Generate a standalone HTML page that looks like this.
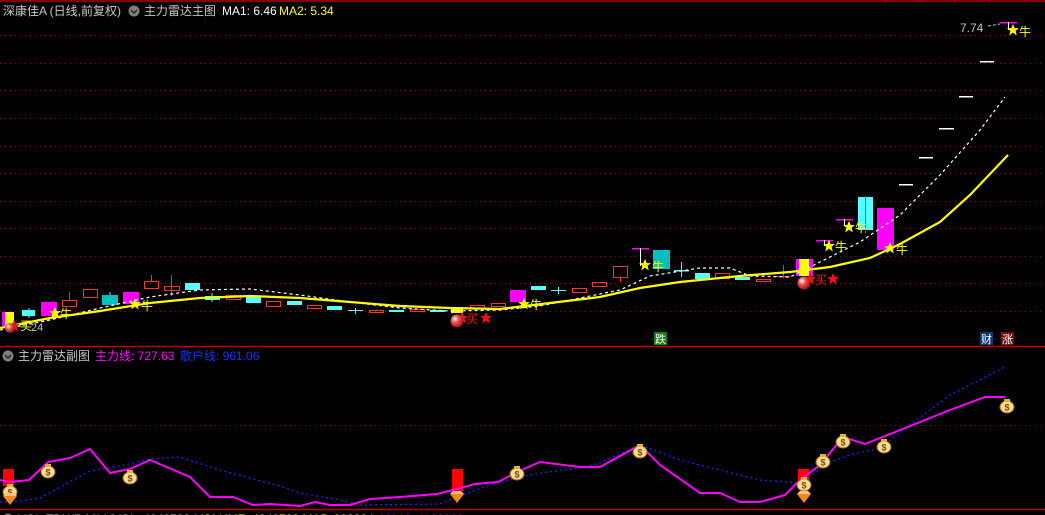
<!DOCTYPE html>
<html><head><meta charset="utf-8"><style>
html,body{margin:0;padding:0;background:#000;width:1045px;height:515px;overflow:hidden}
svg{display:block}
text{font-family:"Liberation Sans","Noto Sans CJK SC",sans-serif}
</style></head><body>
<svg width="1045" height="515" viewBox="0 0 1045 515" xmlns="http://www.w3.org/2000/svg">
<defs>
<g id="star"><polygon points="0,-6 1.8,-1.9 6,-1.9 2.6,0.8 3.8,5.5 0,2.6 -3.8,5.5 -2.6,0.8 -6,-1.9 -1.8,-1.9" /></g>
<g id="bag"><ellipse cx="0" cy="2" rx="7" ry="6" fill="#f4e08a" stroke="#9b6a10" stroke-width="1"/><rect x="-3" y="-6" width="6" height="3" fill="#e8b030"/><text x="0" y="5.5" font-size="9" font-weight="bold" fill="#8a3a2a" text-anchor="middle">$</text></g>
<g id="dia"><polygon points="-7,-3 7,-3 0,6" fill="#f08a20"/><polygon points="-7,-3 7,-3 4,-6 -4,-6" fill="#ffc080"/></g>
<radialGradient id="ball" cx="0.35" cy="0.35" r="0.7"><stop offset="0" stop-color="#fff"/><stop offset="0.4" stop-color="#f05050"/><stop offset="1" stop-color="#901010"/></radialGradient>
</defs>
<line x1="0" y1="1" x2="1045" y2="1" stroke="#b00000" stroke-width="1.5"/>
<g stroke="#b00000" stroke-width="1">
<line x1="35" y1="0" x2="35" y2="3"/><line x1="885" y1="0" x2="885" y2="3"/><line x1="920" y1="0" x2="920" y2="3"/><line x1="955" y1="0" x2="955" y2="3"/><line x1="990" y1="0" x2="990" y2="3"/><line x1="1025" y1="0" x2="1025" y2="3"/>
</g>
<g stroke="#900000" stroke-width="1" stroke-dasharray="1,4">
<line x1="0" y1="35.5" x2="1045" y2="35.5"/><line x1="0" y1="63.5" x2="1045" y2="63.5"/><line x1="0" y1="90.5" x2="1045" y2="90.5"/><line x1="0" y1="118.5" x2="1045" y2="118.5"/><line x1="0" y1="146.5" x2="1045" y2="146.5"/><line x1="0" y1="173.5" x2="1045" y2="173.5"/><line x1="0" y1="201.5" x2="1045" y2="201.5"/><line x1="0" y1="228.5" x2="1045" y2="228.5"/><line x1="0" y1="256.5" x2="1045" y2="256.5"/><line x1="0" y1="283.5" x2="1045" y2="283.5"/><line x1="0" y1="311.5" x2="1045" y2="311.5"/>
<line x1="0" y1="425.5" x2="1045" y2="425.5"/>
</g>
<line x1="0" y1="346.5" x2="1045" y2="346.5" stroke="#c00000" stroke-width="1.5"/>
<line x1="0" y1="509.5" x2="1045" y2="509.5" stroke="#c00000" stroke-width="1.5"/>

<text x="3" y="15" font-size="12" fill="#c8c8c8">深康佳A (日线,前复权)</text>
<circle cx="134" cy="11" r="5.5" fill="#808080"/><path d="M131,10 l3,3 l3,-3" stroke="#222" stroke-width="1.4" fill="none"/>
<text x="144" y="15" font-size="12" fill="#c8c8c8">主力雷达主图</text>
<text x="222" y="15" font-size="12" fill="#fff">MA1: 6.46</text>
<text x="279" y="15" font-size="12" fill="#ffff00">MA2: 5.34</text>

<g shape-rendering="crispEdges">
<rect x="2" y="312" width="5" height="14" fill="#ff00ff"/><rect x="5" y="312" width="9" height="13" fill="#ffff00"/>
<rect x="22" y="310" width="13" height="6" fill="#54ffff"/><line x1="29" y1="308" x2="29" y2="318" stroke="#54ffff"/>
<rect x="41" y="302" width="16" height="14" fill="#ff00ff"/>
<rect x="62.5" y="300.5" width="14" height="6" fill="none" stroke="#ff3232"/><line x1="69.5" y1="292" x2="69.5" y2="300" stroke="#ff3232"/>
<rect x="83.5" y="289.5" width="14" height="8" fill="none" stroke="#ff3232"/>
<rect x="102" y="295" width="16" height="10" fill="#00c0c0"/><line x1="110" y1="292" x2="110" y2="295" stroke="#54ffff"/>
<rect x="123" y="292" width="16" height="12" fill="#ff00ff"/>
<rect x="144.5" y="281.5" width="14" height="7" fill="none" stroke="#ff3232"/><line x1="151.5" y1="275" x2="151.5" y2="281" stroke="#ff3232"/>
<rect x="164.5" y="286.5" width="15" height="4" fill="none" stroke="#ff3232"/><line x1="171.5" y1="275" x2="171.5" y2="296" stroke="#ff3232"/>
<rect x="185" y="283" width="15" height="7" fill="#54ffff"/>
<rect x="205" y="296" width="15" height="4" fill="#54ffff"/><line x1="212" y1="293" x2="212" y2="302" stroke="#54ffff"/>
<rect x="226.5" y="295.5" width="14" height="4" fill="none" stroke="#ff3232"/>
<rect x="246" y="296" width="15" height="7" fill="#54ffff"/>
<rect x="266.5" y="301.5" width="14" height="5" fill="none" stroke="#ff3232"/>
<rect x="287" y="301" width="15" height="4" fill="#54ffff"/>
<rect x="307.5" y="305.5" width="14" height="3" fill="none" stroke="#ff3232"/>
<rect x="327" y="306" width="15" height="4" fill="#54ffff"/>
<line x1="348" y1="310.5" x2="363" y2="310.5" stroke="#54ffff"/><line x1="355.5" y1="308" x2="355.5" y2="314" stroke="#54ffff"/>
<rect x="369.5" y="310.5" width="14" height="2" fill="none" stroke="#ff3232"/>
<rect x="389" y="310" width="15" height="2" fill="#54ffff"/>
<rect x="410.5" y="309.5" width="14" height="2" fill="none" stroke="#ff3232"/>
<rect x="430" y="310" width="15" height="2" fill="#54ffff"/>
<rect x="451" y="307" width="12" height="6" fill="#ffff00"/>
<rect x="470.5" y="305.5" width="14" height="3" fill="none" stroke="#ff3232"/>
<rect x="491.5" y="303.5" width="14" height="3" fill="none" stroke="#ff3232"/>
<rect x="510" y="290" width="16" height="12" fill="#ff00ff"/>
<rect x="531" y="286" width="15" height="4" fill="#54ffff"/>
<line x1="551" y1="290.5" x2="566" y2="290.5" stroke="#54ffff"/><line x1="558.5" y1="287" x2="558.5" y2="294" stroke="#54ffff"/>
<rect x="572.5" y="288.5" width="14" height="4" fill="none" stroke="#ff3232"/>
<rect x="592.5" y="282.5" width="14" height="4" fill="none" stroke="#ff3232"/>
<rect x="613.5" y="266.5" width="14" height="11" fill="none" stroke="#ff3232"/><line x1="620.5" y1="278" x2="620.5" y2="282" stroke="#ff3232"/>
<line x1="632" y1="248.5" x2="649" y2="248.5" stroke="#ff00ff" stroke-width="1.5"/><line x1="640.5" y1="248" x2="640.5" y2="266" stroke="#fff"/>
<rect x="653" y="250" width="17" height="19" fill="#00c0c0"/>
<line x1="674" y1="270.5" x2="689" y2="270.5" stroke="#54ffff" stroke-width="1.5"/><line x1="681.5" y1="262" x2="681.5" y2="277" stroke="#54ffff"/>
<rect x="695" y="273" width="15" height="6" fill="#54ffff"/>
<rect x="715.5" y="273.5" width="14" height="5" fill="none" stroke="#ff3232"/>
<rect x="735" y="277" width="15" height="3" fill="#54ffff"/>
<rect x="756.5" y="279.5" width="14" height="2" fill="none" stroke="#ff3232"/>
<line x1="776" y1="276.5" x2="790" y2="276.5" stroke="#ff3232"/><line x1="783.5" y1="265" x2="783.5" y2="278" stroke="#ff3232"/>
<rect x="796" y="259" width="17" height="17" fill="#ff00ff"/><rect x="799" y="259" width="10" height="17" fill="#ffff00"/>
<line x1="816" y1="240.5" x2="833" y2="240.5" stroke="#ff00ff" stroke-width="1.5"/><line x1="824.5" y1="240" x2="824.5" y2="246" stroke="#fff"/>
<line x1="836" y1="219.5" x2="853" y2="219.5" stroke="#ff00ff" stroke-width="1.5"/><line x1="844.5" y1="219" x2="844.5" y2="226" stroke="#fff"/>
<rect x="858" y="197" width="15" height="33" fill="#54ffff"/><line x1="865.5" y1="196" x2="865.5" y2="233" stroke="#ff00ff"/>
<rect x="877" y="208" width="17" height="42" fill="#ff00ff"/>
<line x1="899" y1="184.5" x2="913" y2="184.5" stroke="#fff" stroke-width="1.5"/>
<line x1="919" y1="157.5" x2="933" y2="157.5" stroke="#fff" stroke-width="1.5"/>
<line x1="939" y1="128.5" x2="954" y2="128.5" stroke="#fff" stroke-width="1.5"/>
<line x1="959" y1="96.5" x2="973" y2="96.5" stroke="#fff" stroke-width="1.5"/>
<line x1="980" y1="61.5" x2="994" y2="61.5" stroke="#fff" stroke-width="1.5"/>
<line x1="1000" y1="22.5" x2="1017" y2="22.5" stroke="#ff00ff" stroke-width="1.5"/><line x1="1008.5" y1="22" x2="1008.5" y2="30" stroke="#fff"/>
</g>
<text x="960" y="32" font-size="12" fill="#c0c0c0">7.74</text>
<path d="M988,26 L1000,24" stroke="#c0c0c0" stroke-dasharray="3,2"/>

<polyline fill="none" stroke="#fff" stroke-width="1.2" stroke-dasharray="3,3" points="0,330 50,320 100,308 150,297 200,290 250,289 300,295 350,302 400,308 450,311 500,310 540,306 580,298 620,290 650,276 700,268 730,268 750,276 790,277 820,262 860,242 900,215 940,175 980,130 1005,97"/>
<polyline fill="none" stroke="#ffff00" stroke-width="2.2" points="0,328 50,318 100,311 150,303 200,298 250,296 300,298 350,302 400,306 450,308 500,309 550,303 600,297 640,288 680,282 740,276 790,272 830,267 870,258 900,244 940,222 970,195 1008,155"/>

<g fill="#ffff00">
<use href="#star" x="55" y="313"/><use href="#star" x="135" y="304"/><use href="#star" x="524" y="304"/><use href="#star" x="645" y="265"/><use href="#star" x="829" y="246"/><use href="#star" x="849" y="227"/><use href="#star" x="890" y="248"/><use href="#star" x="1013" y="30"/>
</g>
<g font-size="12" fill="#ffff00">
<text x="60" y="318">牛</text><text x="141" y="310">牛</text><text x="530" y="309">牛</text><text x="652" y="271">牛</text><text x="835" y="251">牛</text><text x="855" y="232">牛</text><text x="896" y="254">牛</text><text x="1019" y="36">牛</text>
<text x="20" y="330">买</text>
</g>
<text x="31" y="331" font-size="11" fill="#c0c0c0">24</text>
<g fill="#ff1010">
<use href="#star" x="14" y="326"/><use href="#star" x="462" y="318"/><use href="#star" x="486" y="318"/><use href="#star" x="810" y="279"/><use href="#star" x="833" y="279"/>
</g>
<g font-size="12" fill="#ff1010"><text x="466" y="323">买</text><text x="815" y="284">买</text></g>
<circle cx="10" cy="328" r="5" fill="url(#ball)"/>
<circle cx="457" cy="321" r="6.5" fill="url(#ball)"/>
<circle cx="804" cy="283" r="6.5" fill="url(#ball)"/>

<rect x="654" y="332" width="13" height="13" fill="#108010"/><text x="655" y="343" font-size="11" fill="#fff">跌</text>
<rect x="980" y="332" width="13" height="13" fill="#103870"/><text x="981" y="343" font-size="11" fill="#fff">财</text>
<rect x="1001" y="332" width="13" height="13" fill="#701010"/><text x="1002" y="343" font-size="11" fill="#fff">涨</text>

<circle cx="8" cy="356" r="5.5" fill="#808080"/><path d="M5,355 l3,3 l3,-3" stroke="#222" stroke-width="1.4" fill="none"/>
<text x="18" y="360" font-size="12" fill="#c8c8c8">主力雷达副图</text>
<text x="95" y="360" font-size="12" fill="#ff00ff">主力线: 727.63</text>
<text x="180" y="360" font-size="12" fill="#1030ff">散户线: 961.06</text>

<g shape-rendering="crispEdges" fill="#ff0000">
<rect x="3" y="469" width="11" height="17"/><rect x="452" y="469" width="11" height="22"/><rect x="798" y="469" width="11" height="12"/>
</g>
<polyline fill="none" stroke="#1030ff" stroke-width="1.2" stroke-dasharray="2,3" points="0,502 20,501 40,498 90,471 120,466 150,459 180,457 220,470 280,486 300,493 340,500 360,505 440,504 460,496 490,485 520,477 540,473 580,468 600,463 640,445 680,460 760,480 800,483 830,462 850,455 880,448 910,425 950,395 1005,367"/>
<polyline fill="none" stroke="#ff00ff" stroke-width="2" points="0,480 10,482 29,480 48,462 70,458 90,449 110,473 130,469 150,460 190,477 210,497 233,497 253,505 270,504 300,506 315,502 330,505 350,505 370,499 400,497 437,494 457,489 475,484 498,482 517,472 540,462 580,467 600,467 640,445 660,465 700,493 720,493 740,502 760,502 785,495 800,480 820,465 843,437 865,444 885,436 950,410 985,397 1005,397"/>
<use href="#bag" x="10" y="490"/><use href="#bag" x="48" y="470"/><use href="#bag" x="130" y="476"/><use href="#bag" x="517" y="472"/><use href="#bag" x="640" y="450"/><use href="#bag" x="804" y="483"/><use href="#bag" x="823" y="460"/><use href="#bag" x="843" y="440"/><use href="#bag" x="884" y="445"/><use href="#bag" x="1007" y="405"/>
<use href="#dia" x="10" y="499"/><use href="#dia" x="457" y="497"/><use href="#dia" x="804" y="497"/>

<circle cx="8" cy="519" r="5.5" fill="#808080"/>
<text x="18" y="523" font-size="12" fill="#c8c8c8">VOL-TDX(5,10) VVOL: 4340788</text>
<text x="195" y="523" font-size="12" fill="#ffff00">VOLUME: 4340788 MA5: 808284</text>
<text x="380" y="523" font-size="12" fill="#ff00ff">MA10: 1180000</text>
</svg>
</body></html>
